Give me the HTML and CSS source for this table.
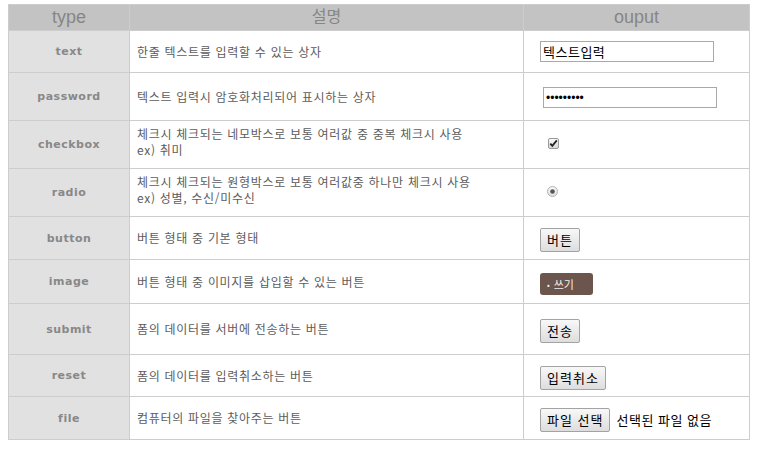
FILE: index.html
```html
<!DOCTYPE html>
<html lang="ko">
<head>
<meta charset="utf-8">
<title>input type</title>
<link rel="stylesheet" href="styles.css">
</head>
<body>
<table class="types">
  <thead>
    <tr class="head">
      <th class="c-type">type</th>
      <th class="c-desc">설명</th>
      <th class="c-out">ouput</th>
    </tr>
  </thead>
  <tbody>
    <tr class="h42">
      <td class="c-type">text</td>
      <td class="c-desc">한줄 텍스트를 입력할 수 있는 상자</td>
      <td class="c-out"><input class="field" type="text" value="텍스트입력"></td>
    </tr>
    <tr class="h48">
      <td class="c-type">password</td>
      <td class="c-desc">텍스트 입력시 암호화처리되어 표시하는 상자</td>
      <td class="c-out"><input class="field field-pw" type="password" value="123456789"></td>
    </tr>
    <tr class="h48">
      <td class="c-type">checkbox</td>
      <td class="c-desc two">체크시 체크되는 네모박스로 보통 여러값 중 중복 체크시 사용<br>ex) 취미</td>
      <td class="c-out">
        <svg class="tick" width="11" height="11" viewBox="0 0 11 11">
          <defs>
            <linearGradient id="cb" x1="0" y1="0" x2="0" y2="1">
              <stop offset="0" stop-color="#fcfcfc"/>
              <stop offset="1" stop-color="#d6d6d6"/>
            </linearGradient>
          </defs>
          <rect x="0.5" y="0.5" width="10" height="10" rx="1.5" fill="url(#cb)" stroke="#9a9a9a"/>
          <path d="M2.3 5.6 L4.3 7.8 L8.8 2.4" fill="none" stroke="#222" stroke-width="1.8"/>
        </svg>
      </td>
    </tr>
    <tr class="h48">
      <td class="c-type">radio</td>
      <td class="c-desc two">체크시 체크되는 원형박스로 보통 여러값중 하나만 체크시 사용<br>ex) 성별, 수신/미수신</td>
      <td class="c-out">
        <svg class="dot" width="11" height="11" viewBox="0 0 11 11">
          <defs>
            <linearGradient id="rb" x1="0" y1="0" x2="0" y2="1">
              <stop offset="0" stop-color="#fbfbfb"/>
              <stop offset="1" stop-color="#dedede"/>
            </linearGradient>
          </defs>
          <circle cx="5.5" cy="5.5" r="5" fill="url(#rb)" stroke="#b0b0b0"/>
          <circle cx="5.5" cy="5.5" r="2.3" fill="#555"/>
        </svg>
      </td>
    </tr>
    <tr class="h43">
      <td class="c-type">button</td>
      <td class="c-desc">버튼 형태 중 기본 형태</td>
      <td class="c-out"><button class="btn" type="button">버튼</button></td>
    </tr>
    <tr class="h44">
      <td class="c-type">image</td>
      <td class="c-desc">버튼 형태 중 이미지를 삽입할 수 있는 버튼</td>
      <td class="c-out"><button class="img-btn" type="button"><span class="bullet">•</span>쓰기</button></td>
    </tr>
    <tr class="h51">
      <td class="c-type">submit</td>
      <td class="c-desc">폼의 데이터를 서버에 전송하는 버튼</td>
      <td class="c-out"><button class="btn" type="button">전송</button></td>
    </tr>
    <tr class="h42">
      <td class="c-type">reset</td>
      <td class="c-desc">폼의 데이터를 입력취소하는 버튼</td>
      <td class="c-out"><button class="btn" type="button">입력취소</button></td>
    </tr>
    <tr class="h43">
      <td class="c-type">file</td>
      <td class="c-desc">컴퓨터의 파일을 찾아주는 버튼</td>
      <td class="c-out"><span class="file"><button class="btn" type="button">파일 선택</button><span class="file-name">선택된 파일 없음</span></span></td>
    </tr>
  </tbody>
</table>
</body>
</html>
```

FILE: styles.css
```css
html, body {
  background: #ffffff;
}
body {
  margin: 4px 8px;
  font-family: "Noto Sans CJK KR", sans-serif;
}
.types {
  border-collapse: collapse;
  width: 742px;
  table-layout: fixed;
}
.types th,
.types td {
  border: 1px solid #cdcdcd;
  padding: 0;
  vertical-align: middle;
}
.types .c-type { width: 120px; }
.types .c-desc { width: 393px; }
.types .c-out  { width: 225px; }

.head { height: 26px; }
.h42 { height: 42px; }
.h43 { height: 43px; }
.h44 { height: 44px; }
.h48 { height: 48px; }
.h51 { height: 51px; }

.types th {
  background: #c3c3c3;
  color: #868686;
  font-family: "Liberation Sans", "Noto Sans CJK KR", sans-serif;
  font-size: 18px;
  font-weight: normal;
  line-height: 20px;
  text-align: center;
  padding-bottom: 1px;
}
.types th.c-desc {
  font-size: 16px;
}
.types td.c-type {
  background: #e1e1e1;
  color: #888888;
  font-family: "DejaVu Sans", sans-serif;
  font-weight: bold;
  font-size: 11px;
  letter-spacing: 0.5px;
  text-align: center;
}
.types td.c-desc {
  color: #5c5c5c;
  font-size: 12px;
  line-height: 16px;
  letter-spacing: 0.7px;
  padding-left: 7px;
}
.types td.c-desc.two {
  padding-bottom: 6px;
}
.types td.c-out {
  padding-left: 16px;
  padding-top: 4px;
  font-size: 13px;
  line-height: 16px;
}

.field {
  display: block;
  box-sizing: border-box;
  width: 174px;
  height: 21px;
  margin: -4px 0 0 0;
  padding: 0 2px;
  border: 1px solid #a9a9a9;
  border-radius: 0;
  font-family: "Noto Sans CJK KR", sans-serif;
  font-size: 13px;
  letter-spacing: 0.5px;
  color: #000;
  background: #fff;
}
.field-pw {
  margin-left: 3px;
  margin-top: -2px;
  font-family: "Liberation Sans", sans-serif;
  font-size: 12px;
  letter-spacing: 0;
}
.tick, .dot {
  display: block;
  margin: -6px 0 0 8px;
}
.dot { margin-left: 7px; }

.btn {
  box-sizing: border-box;
  height: 24px;
  padding: 0 6px;
  border: 1px solid #a3a3a3;
  border-radius: 2px;
  background: linear-gradient(#f8f8f8, #dddddd);
  font-family: "Noto Sans CJK KR", sans-serif;
  font-size: 13px;
  line-height: 20px;
  color: #000;
  letter-spacing: 1px;
  vertical-align: middle;
}
.img-btn {
  box-sizing: border-box;
  width: 53px;
  height: 22px;
  padding: 0 0 0 7px;
  border: 0;
  border-radius: 3px;
  background: #6b554c;
  color: #f2eeec;
  font-family: "Noto Sans CJK KR", sans-serif;
  font-size: 11px;
  line-height: 22px;
  text-align: left;
  display: block;
}
.bullet {
  font-size: 8px;
  margin-right: 4px;
  vertical-align: 1px;
}
.file {
  display: inline-flex;
  align-items: center;
  gap: 6px;
}
.file-name {
  color: #000;
  font-size: 13px;
  letter-spacing: 0.5px;
}
```
